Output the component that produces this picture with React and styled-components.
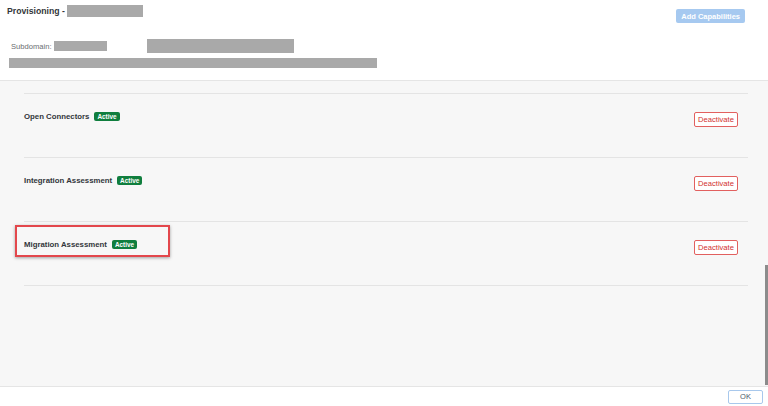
import React from 'react';
import styled, { createGlobalStyle } from 'styled-components';

const GlobalStyle = createGlobalStyle`
  html, body {
    margin: 0;
    padding: 0;
    background: #ffffff;
  }
  body {
    font-family: "Liberation Sans", Arial, sans-serif;
    color: #32363a;
  }
`;

const Page = styled.div`
  width: 768px;
  height: 406px;
  display: flex;
  flex-direction: column;
  overflow: hidden;
`;

const Header = styled.div`
  height: 81px;
  box-sizing: border-box;
  border-bottom: 1px solid #e5e5e5;
  background: #ffffff;
  padding: 4px 23px 0 7px;
  display: flex;
  flex-direction: column;
`;

const TitleBar = styled.div`
  display: flex;
  align-items: flex-start;
  justify-content: space-between;
`;

const Title = styled.div`
  display: flex;
  align-items: center;
  gap: 2px;
  font-size: 8.7px;
  font-weight: 700;
  color: #32363a;
  height: 12px;
  margin-top: 1px;
`;

const Redacted = styled.span`
  display: inline-block;
  background: #a9a9a9;
  width: ${p => p.w}px;
  height: ${p => p.h}px;
`;

const AddButton = styled.button`
  margin-top: 5px;
  height: 14px;
  padding: 0 5px;
  border: none;
  border-radius: 2px;
  background: #a6c9f0;
  color: #ffffff;
  font-family: inherit;
  font-size: 7.5px;
  font-weight: 700;
`;

const SubRow = styled.div`
  display: flex;
  align-items: center;
  margin-top: 16px;
  padding-left: 4px;
  font-size: 7.6px;
  color: #6a6d70;
  height: 14px;
`;

const SubLabel = styled.span`
  margin-right: 2px;
`;

const Spacer = styled.span`
  width: 40px;
`;

const LongBar = styled.div`
  margin-top: 5px;
  margin-left: 2px;
  width: 368px;
  height: 10px;
  background: #a9a9a9;
`;

const Content = styled.div`
  flex: 1;
  position: relative;
  background: #f7f7f7;
  padding: 12px 20px 0 24px;
`;

const List = styled.div`
  border-bottom: 1px solid #e4e4e4;
`;

const Row = styled.div`
  position: relative;
  height: 64px;
  box-sizing: border-box;
  border-top: 1px solid #e4e4e4;
  display: flex;
  justify-content: space-between;
  align-items: flex-start;
  padding: 0 10px 0 0;
`;

const Name = styled.div`
  display: flex;
  align-items: center;
  gap: 5px;
  margin-top: 17px;
  font-size: 7.8px;
  font-weight: 700;
  color: #32363a;
  height: 10px;
`;

const Badge = styled.span`
  background: #107e3e;
  color: #ffffff;
  font-size: 6.4px;
  font-weight: 700;
  border-radius: 2px;
  padding: 1px 3px;
  line-height: 7px;
`;

const Deactivate = styled.button`
  margin-top: 18px;
  height: 15px;
  width: 44px;
  padding: 0;
  background: #ffffff;
  border: 1px solid #e2605f;
  border-radius: 2px;
  color: #d2302f;
  font-family: inherit;
  font-size: 7.6px;
`;

const Highlight = styled.div`
  position: absolute;
  left: -9px;
  top: 3px;
  width: 151px;
  height: 28px;
  border: 2px solid #e3474c;
  box-shadow: 0 1px 3px rgba(0, 0, 0, 0.35);
  pointer-events: none;
`;

const ScrollThumb = styled.div`
  position: absolute;
  right: 0;
  bottom: 1px;
  width: 3px;
  height: 120px;
  background: #8c8c8c;
`;

const Footer = styled.div`
  height: 20px;
  box-sizing: border-box;
  border-top: 1px solid #e5e5e5;
  background: #ffffff;
  display: flex;
  justify-content: flex-end;
  align-items: center;
  padding-right: 5px;
`;

const OkButton = styled.button`
  width: 35px;
  height: 14px;
  padding: 0;
  background: #ffffff;
  border: 1px solid #a8c8ec;
  border-radius: 2px;
  color: #4a5a6a;
  font-family: inherit;
  font-size: 7.5px;
`;

const capabilities = [
  { name: 'Open Connectors' },
  { name: 'Integration Assessment' },
  { name: 'Migration Assessment', marked: true },
];

export default function App() {
  return (
    <React.Fragment>
      <GlobalStyle />
      <Page>
        <Header>
          <TitleBar>
            <Title>
              Provisioning -
              <Redacted w={76} h={12} />
            </Title>
            <AddButton>Add Capabilities</AddButton>
          </TitleBar>
          <SubRow>
            <SubLabel>Subdomain:</SubLabel>
            <Redacted w={53} h={10} />
            <Spacer />
            <Redacted w={147} h={14} />
          </SubRow>
          <LongBar />
        </Header>
        <Content>
          <List>
            {capabilities.map((item, index) => (
              <Row key={index}>
                <Name>
                  {item.name}
                  <Badge>Active</Badge>
                </Name>
                <Deactivate>Deactivate</Deactivate>
                {item.marked && <Highlight />}
              </Row>
            ))}
          </List>
          <ScrollThumb />
        </Content>
        <Footer>
          <OkButton>OK</OkButton>
        </Footer>
      </Page>
    </React.Fragment>
  );
}
